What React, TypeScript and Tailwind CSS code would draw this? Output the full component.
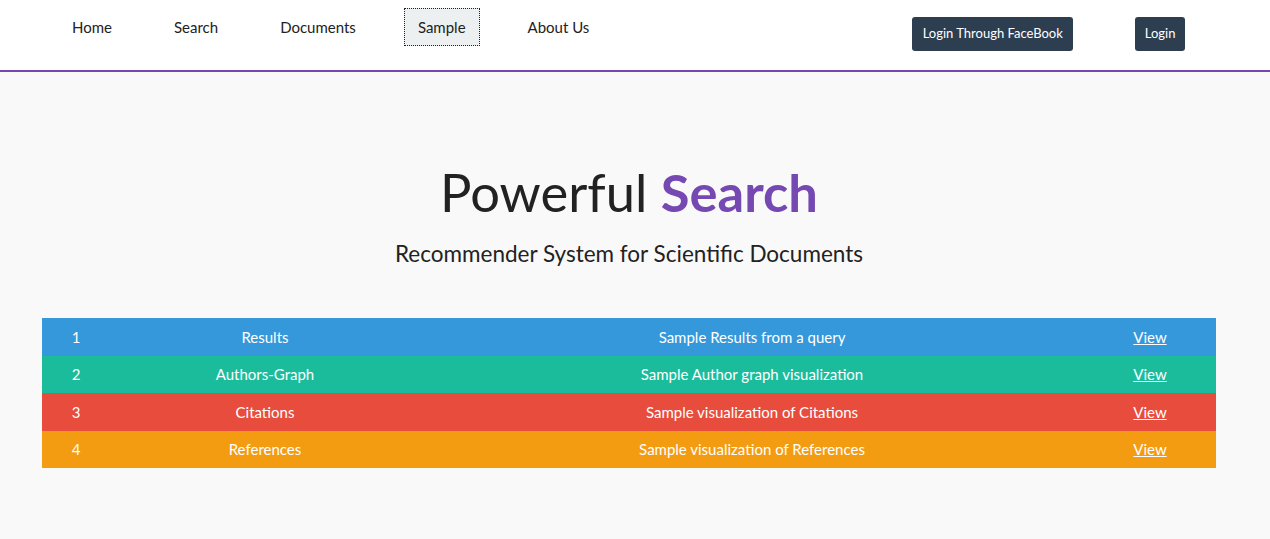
import React from "react";

const rows = [
  { n: 1, name: "Results", desc: "Sample Results from a query", bg: "bg-[#3498db]" },
  { n: 2, name: "Authors-Graph", desc: "Sample Author graph visualization", bg: "bg-[#1abc9c]" },
  { n: 3, name: "Citations", desc: "Sample visualization of Citations", bg: "bg-[#e74c3c]" },
  { n: 4, name: "References", desc: "Sample visualization of References", bg: "bg-[#f39c12]" },
];

const links = ["Home", "Search", "Documents", "Sample", "About Us"];

export default function App() {
  return (
    <div className="min-h-[539px] bg-[#f9f9f9] font-['Lato',sans-serif] text-[#222]">
      {/* Top navigation */}
      <nav className="h-[72px] bg-white border-b-2 border-[#7549b1] flex items-start justify-between pl-[58px] pr-[85px]">
        <ul className="flex gap-[34px] pt-[8px]">
          {links.map((l) => (
            <li
              key={l}
              className={
                "h-[38px] px-[13px] flex items-center text-[15px] text-[#222] border border-dotted " +
                (l === "Sample" ? "bg-[#ecf0f1] border-[#222]" : "border-transparent")
              }
            >
              {l}
            </li>
          ))}
        </ul>
        <div className="flex gap-[62px] pt-[17px]">
          <button className="h-[34px] px-[10.5px] rounded-[3px] bg-[#2c3e50] text-white text-[13px]">
            Login Through FaceBook
          </button>
          <button className="h-[34px] px-[9.5px] rounded-[3px] bg-[#2c3e50] text-white text-[13px]">
            Login
          </button>
        </div>
      </nav>

      {/* Hero */}
      <div className="text-center pt-[88px] pr-[12px]">
        <h1 className="text-[52.5px] leading-[64px] text-[#222]">
          Powerful <span className="font-bold text-[#7549b1]">Search</span>
        </h1>
        <p className="mt-[16px] text-[22.5px] leading-[28px] text-[#222]">
          Recommender System for Scientific Documents
        </p>
      </div>

      {/* Samples table */}
      <div className="pl-[42px] pr-[54px] mt-[50px]">
        <table className="w-full text-white text-[15px] border-collapse">
          <tbody>
            {rows.map((r) => (
              <tr key={r.n} className={r.bg + " h-[37.5px]"}>
                <td className="w-[68px] text-center">{r.n}</td>
                <td className="w-[310px] text-center">{r.name}</td>
                <td className="text-center">{r.desc}</td>
                <td className="w-[132px] text-center">
                  <a href="#" className="underline">View</a>
                </td>
              </tr>
            ))}
          </tbody>
        </table>
      </div>
    </div>
  );
}
